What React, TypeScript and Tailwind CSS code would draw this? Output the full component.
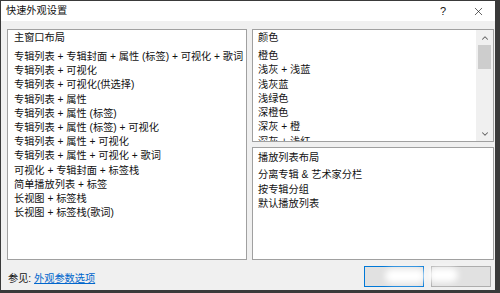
import { ChevronUp, ChevronDown, X } from "lucide-react";

const mainLayouts = [
  "专辑列表 + 专辑封面 + 属性 (标签) + 可视化 + 歌词",
  "专辑列表 + 可视化",
  "专辑列表 + 可视化(供选择)",
  "专辑列表 + 属性",
  "专辑列表 + 属性 (标签)",
  "专辑列表 + 属性 (标签) + 可视化",
  "专辑列表 + 属性 + 可视化",
  "专辑列表 + 属性 + 可视化 + 歌词",
  "可视化 + 专辑封面 + 标签栈",
  "简单播放列表 + 标签",
  "长视图 + 标签栈",
  "长视图 + 标签栈(歌词)",
];

const colours = ["橙色", "浅灰 + 浅蓝", "浅灰蓝", "浅绿色", "深橙色", "深灰 + 橙", "深灰 + 浅红"];

const playlistLayouts = ["分离专辑 & 艺术家分栏", "按专辑分组", "默认播放列表"];

const font = "font-['Liberation_Sans','Noto_Sans_CJK_SC',sans-serif]";

export default function App() {
  return (
    <div className={`h-[293px] w-[500px] overflow-hidden bg-[#3a3a3a] pl-px pt-px text-[10.2px] leading-[14px] text-[#111] ${font}`}>
      <div className="flex h-[289px] w-[494px] flex-col bg-[#f0f0f0]">
        {/* title bar */}
        <div className="flex h-[20px] items-center bg-white pl-[5px]">
          <span className="flex-1">快速外观设置</span>
          <span className="w-[36px] text-center text-[11px]">?</span>
          <span className="flex w-[34px] justify-center">
            <X size={13} strokeWidth={1.2} />
          </span>
        </div>

        <div className="mt-[8px] flex gap-[5px] pl-[6px]">
          {/* main window layouts */}
          <div className="h-[231px] w-[240px] border border-[#a0a0a0] bg-white px-[6px] pt-[1px]">
            <div className="mb-[5px] h-[14px]">主窗口布局</div>
            {mainLayouts.map((t) => (
              <div key={t} className="h-[14.2px] whitespace-nowrap">
                {t}
              </div>
            ))}
          </div>

          <div className="flex flex-col gap-[5px]">
            {/* colours with scrollbar */}
            <div className="flex h-[113px] w-[242px] border border-[#a0a0a0] bg-white">
              <div className="flex-1 overflow-hidden px-[5px] pt-[1px]">
                <div className="mb-[4px] h-[14px]">颜色</div>
                {colours.map((c) => (
                  <div key={c} className="h-[14.3px] whitespace-nowrap">
                    {c}
                  </div>
                ))}
              </div>
              <div className="flex w-[17px] flex-col bg-[#f0f0f0]">
                <div className="flex h-[15px] items-center justify-center text-[#606060]">
                  <ChevronUp size={10} strokeWidth={2.5} />
                </div>
                <div className="mx-[2px] h-[24px] bg-[#cdcdcd]" />
                <div className="flex-1" />
                <div className="flex h-[15px] items-center justify-center text-[#606060]">
                  <ChevronDown size={10} strokeWidth={2.5} />
                </div>
              </div>
            </div>

            {/* playlist layouts */}
            <div className="h-[113px] w-[242px] border border-[#a0a0a0] bg-white px-[5px] pt-[3px]">
              <div className="mb-[3px] h-[14px]">播放列表布局</div>
              {playlistLayouts.map((p) => (
                <div key={p} className="h-[14.5px] whitespace-nowrap">
                  {p}
                </div>
              ))}
            </div>
          </div>
        </div>

        {/* footer */}
        <div className="mt-[6px] flex items-center pl-[7px]">
          <span className="mt-[4px]">
            参见: <span className="text-[#0066cc] underline">外观参数选项</span>
          </span>
          <div className="ml-auto flex gap-[7px] pr-[4px]">
            <div className="relative h-[21px] w-[60px] border border-[#0078d7] bg-[#e1e1e1]">
              <div className="absolute left-[20px] top-[2px] h-[14px] w-[40px] rounded-full bg-white blur-[3px]" />
            </div>
            <div className="relative h-[21px] w-[60px] border border-[#adadad] bg-[#e1e1e1]">
              <div className="absolute -left-[4px] top-[1px] h-[14px] w-[30px] rounded-full bg-white blur-[3px]" />
            </div>
          </div>
        </div>
      </div>
    </div>
  );
}
